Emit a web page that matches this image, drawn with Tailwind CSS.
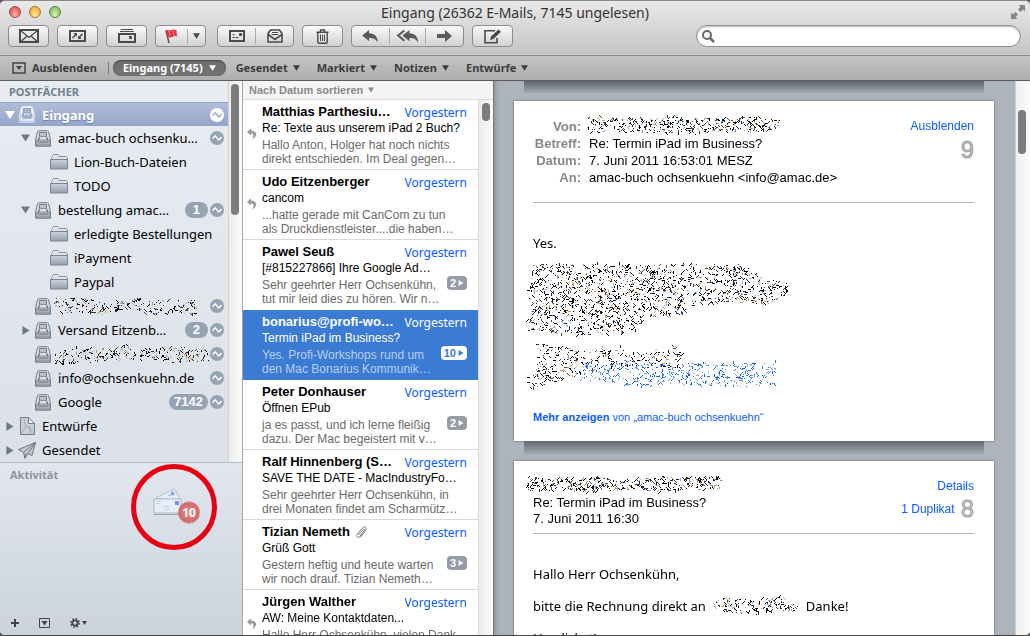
<!DOCTYPE html>
<html lang="de">
<head>
<meta charset="utf-8">
<title>Eingang</title>
<script src="https://cdn.jsdelivr.net/npm/@tailwindcss/browser@4"></script>
</head>
<body class="bg-[#555] font-['Liberation_Sans',sans-serif] text-black">
<svg width="0" height="0" class="absolute">
  <defs>
    <linearGradient id="metal" x1="0" y1="0" x2="0" y2="1"><stop offset="0" stop-color="#ced3dc"/><stop offset="1" stop-color="#979fad"/></linearGradient>
    <linearGradient id="lite" x1="0" y1="0" x2="0" y2="1"><stop offset="0" stop-color="#f4f6fa"/><stop offset="1" stop-color="#ccd3e0"/></linearGradient>
    <radialGradient id="seal"><stop offset="0" stop-color="#e58a87"/><stop offset="1" stop-color="#d06866"/></radialGradient>
  </defs>
  <symbol id="tri-d" viewBox="0 0 10 8"><path d="M0 0h10L5 8z" fill="currentColor"/></symbol>
  <symbol id="tri-r" viewBox="0 0 8 10"><path d="M0 0v10l8-5z" fill="currentColor"/></symbol>
  <symbol id="inbox" viewBox="0 0 16 17">
    <path d="M3.500.7h9l1 1 2 8v6.500H.5V9.700l2-8z" fill="#d5d9e1" stroke="#757d8b"/>
    <path d="M4.500 2.500h7v4l1 2.500v3h-9V9l1-2.500z" fill="#b9c0cb" stroke="#7b8391"/>
    <path d="M4.500 6.500h7v3.500h-7z" fill="#dde1e8" stroke="#7b8391" stroke-width=".8"/>
    <path d="M1 10h2.500v2.500h9V10H15v5.700H1z" fill="#adb4c0" stroke="#7b8391" stroke-width=".8"/>
    <path d="M1.500 15h13" stroke="#8b93a1"/>
  </symbol>
  <symbol id="inbox-w" viewBox="0 0 16 17">
    <path d="M3.500.7h9l1 1 2 8v6.500H.5V9.700l2-8z" fill="url(#lite)" stroke="#e9eef7"/>
    <path d="M4.500 2.500h7v4l1 2.500v3h-9V9l1-2.500z" fill="#a7b5d2" stroke="#8d9dc0"/>
    <path d="M4.500 6.500h7v3.500h-7z" fill="#c5cfe2" stroke="#8d9dc0" stroke-width=".8"/>
    <path d="M1 10h2.500v2.500h9V10H15v5.700H1z" fill="#e3e8f2" stroke="#a9b5cf" stroke-width=".8"/>
  </symbol>
  <symbol id="folder" viewBox="0 0 18 16">
    <path d="M1.500 14.500v-11l1-1V1.400l1-.9h4.500l1 1.200V2.500h7.500l1 1v11z" fill="#dfe2e8" stroke="#8b929f"/>
    <path d="M.5 5.500h17v9.500H.5z" fill="url(#metal)" stroke="#7c8391"/>
  </symbol>
  <symbol id="wave" viewBox="0 0 14 14"><circle cx="7" cy="7" r="7" fill="currentColor"/><path d="M2.500 7.500 5.300 4.800 8.700 9l2.900-3" fill="none" stroke="var(--w,#fff)" stroke-width="1.500"/></symbol>
  <symbol id="reply" viewBox="0 0 18 14"><path d="M7.500 0 0 6l7.500 6V8.500c5 0 7.500 1.500 9.300 5C17 7.500 13.500 3.600 7.500 3.500z" fill="#5a5a5a"/></symbol>
  <symbol id="replied" viewBox="0 0 10 12"><path d="M4 .2 0 4l4 3.600V5.300c2.500.2 3.300 2.700 1.500 6C10.800 8.300 10.400 2.800 4 2.500z" fill="#999"/></symbol>
</svg>

<div class="flex h-screen flex-col overflow-hidden rounded-t-[5px] rounded-b-[5px] border-t border-b border-t-[#8a8a8a] border-b-[#444] bg-[#aab0ba]">
  <header class="shrink-0 font-['Noto_Sans',sans-serif]">
    <div class="border-b border-[#8b8b8b] bg-linear-to-b from-[#e9e9e9] to-[#c5c5c5]">
      <div class="relative flex h-6 items-center">
        <div class="absolute left-[9px] top-[5px] flex gap-2">
          <button aria-label="Schließen" class="size-3 rounded-full border border-[#a24d49] bg-radial-[at_50%_80%] from-[#ffb3a9] to-[#d8413c]"></button>
          <button aria-label="Minimieren" class="size-3 rounded-full border border-[#a9792f] bg-radial-[at_50%_80%] from-[#ffeb9b] to-[#e89c2c]"></button>
          <button aria-label="Zoomen" class="size-3 rounded-full border border-[#578046] bg-radial-[at_50%_80%] from-[#d7f5b5] to-[#6db14f]"></button>
        </div>
        <h1 class="grow text-center text-sm leading-6 text-[#333]">Eingang (26362 E-Mails, 7145 ungelesen)</h1>
        <button aria-label="Vollbild" class="absolute right-[5px] top-1"><svg width="14" height="14" viewBox="0 0 14 14" fill="#868686"><path d="M7.500 0H14v6.500l-2-2-2.500 2.500L7 4.500 9.500 2zM6.500 14H0V7.500l2 2L4.500 7 7 9.500 4.500 12z"/></svg></button>
      </div>
      <div class="flex h-[30px] items-start pl-2 pr-[9px]">
        <div class="flex gap-2">
          <button aria-label="E-Mails abrufen" class="flex h-[22px] w-[41px] items-center justify-center rounded-[4px] border border-[#8c8c8c] bg-linear-to-b from-[#fafafa] to-[#d2d2d2]"><svg width="20" height="14" viewBox="0 0 20 14" fill="none" stroke="#4a4a4a"><path d="M1 1h18v12H1z" stroke-width="2"/><path d="M2 2l8 6.500L18 2M2 12.500l6-5.500M18 12.500 12 7" stroke-width="1.300"/></svg></button>
          <button aria-label="Aktivität" class="flex h-[22px] w-[41px] items-center justify-center rounded-[4px] border border-[#8c8c8c] bg-linear-to-b from-[#fafafa] to-[#d2d2d2]"><svg width="17" height="12" viewBox="0 0 17 12"><path d="M1 1h15v10H1z" fill="none" stroke="#4a4a4a" stroke-width="2"/><path d="M4.500 3H8v3.500L7 5.500 4 8.500l-1-1 2.700-2.700zM12.500 9H9V5.500l1 1L13 3.200l1 1L11.300 7.500z" fill="#4a4a4a"/></svg></button>
          <button aria-label="Archivieren" class="flex h-[22px] w-[41px] items-center justify-center rounded-[4px] border border-[#8c8c8c] bg-linear-to-b from-[#fafafa] to-[#d2d2d2]"><svg width="18" height="14" viewBox="0 0 18 14" fill="none" stroke="#4a4a4a"><path d="M3 .5h12M2 2.500h14" /><path d="M1 5h16v8H1z" stroke-width="2"/><path d="M11.500 7.500h2v2h-2z" fill="#4a4a4a"/></svg></button>
          <div class="flex h-[22px] items-center rounded-[4px] border border-[#8c8c8c] bg-linear-to-b from-[#fafafa] to-[#d2d2d2]">
            <button aria-label="Markieren" class="flex w-8 justify-center border-r border-[#aaa]"><svg width="14" height="15" viewBox="0 0 14 15"><path d="M1 1.500 4 14" stroke="#774545" stroke-width="1.500" fill="none"/><path d="M1 1.500c2-1.500 3.500.5 5.500-.5s3.500-.5 5 .5l.5 6c-2-1-3 0-4.500.5S4 8.500 2.500 8z" fill="#e4323a"/><path d="M4 1l1 6M8 1.500l1 5.500" stroke="#f68b8b"/></svg></button>
            <button aria-label="Markierung wählen" class="flex w-[17px] justify-center"><svg width="7" height="6" class="text-[#4a4a4a]"><use href="#tri-d"/></svg></button>
          </div>
        </div>
        <div class="ml-[11px] flex gap-2">
          <div class="flex h-[22px] items-center rounded-[4px] border border-[#8c8c8c] bg-linear-to-b from-[#fafafa] to-[#d2d2d2]">
            <button aria-label="Als ungelesen markieren" class="flex h-4 w-[38px] items-center justify-center border-r border-[#aaa]"><svg width="16" height="12" viewBox="0 0 16 12" fill="none" stroke="#4a4a4a"><path d="M1 1h14v10H1z" stroke-width="2"/><path d="M10.500 3.500h2v2h-2z" fill="#4a4a4a"/><path d="M3.500 4.500h2M3.500 7.500h2M6.500 7.500h3"/></svg></button>
            <button aria-label="Als gelesen markieren" class="flex w-[37px] justify-center"><svg width="16" height="14" viewBox="0 0 16 14" fill="none" stroke="#4a4a4a" stroke-width="1.600"><path d="M1 4.500 3.500 1h9L15 4.500V13H1z"/><path d="M1 5.500 8 10.500l7-5"/><path d="M5 3.500h6M4.500 5.500h7" stroke-width="1"/></svg></button>
          </div>
          <button aria-label="Löschen" class="flex h-[22px] w-[41px] items-center justify-center rounded-[4px] border border-[#8c8c8c] bg-linear-to-b from-[#fafafa] to-[#d2d2d2]"><svg width="13" height="15" viewBox="0 0 13 15" fill="none" stroke="#4a4a4a" stroke-width="1.400"><path d="M.5 3.200h12M4.500 3V1h4v2M1.800 4v9q0 1.200 1.200 1.200h7q1.200 0 1.200-1.200V4"/><path d="M4.500 5.500v6.500M6.500 5.500v6.500M8.500 5.500v6.500" stroke-width="1"/></svg></button>
          <div class="flex h-[22px] items-center rounded-[4px] border border-[#8c8c8c] bg-linear-to-b from-[#fafafa] to-[#d2d2d2]">
            <button aria-label="Antworten" class="flex h-4 w-[38px] items-center justify-center border-r border-[#aaa]"><svg width="17" height="13"><use href="#reply"/></svg></button>
            <button aria-label="Allen antworten" class="flex h-4 w-9 items-center justify-center border-r border-[#aaa]"><svg width="24" height="13" viewBox="0 0 24 14"><path d="M8 .5 1.500 6 8 11.500" fill="none" stroke="#5a5a5a" stroke-width="2.200"/><svg x="6" width="18" height="14"><use href="#reply"/></svg></svg></button>
            <button aria-label="Weiterleiten" class="flex w-[37px] justify-center"><svg width="15" height="12" viewBox="0 0 15 12"><path d="M0 4h8V0l7 6-7 6V8H0z" fill="#5a5a5a"/></svg></button>
          </div>
          <button aria-label="Neue E-Mail" class="flex h-[22px] w-[41px] items-center justify-center rounded-[4px] border border-[#8c8c8c] bg-linear-to-b from-[#fafafa] to-[#d2d2d2]"><svg width="18" height="15" viewBox="0 0 18 15" fill="none" stroke="#4a4a4a"><path d="M11 1.800H1v12h12V9" stroke-width="1.600"/><path d="m6 11 1-3.500 7.500-7L17 2.700 9.500 10z" fill="#4a4a4a" stroke="none"/></svg></button>
        </div>
        <label class="ml-auto flex h-[22px] w-[325px] items-center gap-2 rounded-full border border-[#8c8c8c] bg-white pl-[5px] shadow-[inset_0_1px_2px_#bbb]">
          <svg width="13" height="13" viewBox="0 0 13 13" fill="none" stroke="#6a6a6a" stroke-width="2"><circle cx="5" cy="5" r="4"/><path d="m8 8 4 4" stroke-width="2.500"/></svg>
          <input type="text" aria-label="Suchen" class="min-w-0 grow bg-transparent text-xs outline-none">
        </label>
      </div>
    </div>
    <nav class="flex h-[25px] items-center border-b border-[#5c5c5c] bg-linear-to-b from-[#c4c4c4] to-[#aeaeae] pl-3 text-[11px] font-bold text-[#3c3c3c]">
      <button class="flex items-center gap-[6px]"><svg width="14" height="12" viewBox="0 0 14 12"><path d="M1 1h12v10H1z" fill="none" stroke="#444" stroke-width="1.500"/><path d="M4 4h6l-3 4z" fill="#444"/></svg>Ausblenden</button>
      <span class="ml-[11px] mr-1 h-3 w-px bg-[#7a7a7a]"></span>
      <button class="flex h-4 items-center gap-[6px] rounded-full bg-[#717171] px-[10px] text-white shadow-[inset_0_1px_2px_#444]">Eingang (7145)<svg width="7" height="6"><use href="#tri-d"/></svg></button>
      <div class="ml-[10px] flex gap-[17px]">
        <button class="flex items-center gap-[5px]">Gesendet<svg width="7" height="6"><use href="#tri-d"/></svg></button>
        <button class="flex items-center gap-[5px]">Markiert<svg width="7" height="6"><use href="#tri-d"/></svg></button>
        <button class="flex items-center gap-[5px]">Notizen<svg width="7" height="6"><use href="#tri-d"/></svg></button>
        <button class="flex items-center gap-[5px]">Entwürfe<svg width="7" height="6"><use href="#tri-d"/></svg></button>
      </div>
    </nav>
  </header>

  <div class="flex min-h-0 grow">
    <aside class="flex w-[243px] shrink-0 flex-col border-r border-[#a5a5a5] font-['Noto_Sans',sans-serif]">
      <div class="flex min-h-0 grow">
        <div class="min-w-0 grow overflow-hidden bg-linear-to-b from-[#e8ecf2] to-[#dce1e9]">
          <h2 class="h-[21px] pl-[9px] text-[11px] font-bold leading-[22px] text-[#717e8d]">POSTFÄCHER</h2>
          <ul class="text-[13px] leading-6">
            <li class="flex h-6 items-center gap-1 border-t border-[#93a2c8] bg-linear-to-b from-[#b0bcd9] to-[#95a5c9] pl-[5px] pr-1 text-white"><svg width="10" height="8"><use href="#tri-d"/></svg><svg width="16" height="17" class="mr-[3px]"><use href="#inbox-w"/></svg><span class="grow font-bold [text-shadow:0_1px_1px_#6b7ba3]">Eingang</span><svg width="14" height="14" class="[--w:#9fadcf]"><use href="#wave"/></svg></li>
            <li class="flex h-6 items-center pl-[21px] pr-1"><svg width="9" height="8" class="mr-[5px] text-[#6c7a88]"><use href="#tri-d"/></svg><svg width="16" height="17" class="mr-[7px]"><use href="#inbox"/></svg><span class="grow whitespace-nowrap">amac-buch ochsenku…</span><svg width="14" height="14" class="shrink-0 text-[#95a3b2]"><use href="#wave"/></svg></li>
            <li class="flex h-6 items-center gap-[6px] pl-[50px]"><svg width="18" height="16"><use href="#folder"/></svg>Lion-Buch-Dateien</li>
            <li class="flex h-6 items-center gap-[6px] pl-[50px]"><svg width="18" height="16"><use href="#folder"/></svg>TODO</li>
            <li class="flex h-6 items-center pl-[21px] pr-1"><svg width="9" height="8" class="mr-[5px] text-[#6c7a88]"><use href="#tri-d"/></svg><svg width="16" height="17" class="mr-[7px]"><use href="#inbox"/></svg><span class="grow whitespace-nowrap">bestellung amac…</span><b class="mr-[2px] h-4 rounded-full bg-[#95a3b2] px-2 font-['Liberation_Sans'] leading-4 text-white">1</b><svg width="14" height="14" class="shrink-0 text-[#95a3b2]"><use href="#wave"/></svg></li>
            <li class="flex h-6 items-center gap-[6px] pl-[50px]"><svg width="18" height="16" class="shrink-0"><use href="#folder"/></svg><span class="whitespace-nowrap">erledigte Bestellungen</span></li>
            <li class="flex h-6 items-center gap-[6px] pl-[50px]"><svg width="18" height="16"><use href="#folder"/></svg>iPayment</li>
            <li class="flex h-6 items-center gap-[6px] pl-[50px]"><svg width="18" height="16"><use href="#folder"/></svg>Paypal</li>
            <li class="flex h-6 items-center pl-[35px] pr-1"><svg width="16" height="17" class="mr-[3px]"><use href="#inbox"/></svg><canvas width="150" height="20" data-seed="5" data-regions='[{"d":"M2 2L30 1 55 8 85 1 115 3 140 4 140 17 100 18 70 14 45 19 20 16 2 18Z","n":210,"c":"ink"}]'></canvas><svg width="14" height="14" class="ml-auto shrink-0 text-[#95a3b2]"><use href="#wave"/></svg></li>
            <li class="flex h-6 items-center pl-[22px] pr-1"><svg width="8" height="9" class="mr-[5px] text-[#6c7a88]"><use href="#tri-r"/></svg><svg width="16" height="17" class="mr-[7px]"><use href="#inbox"/></svg><span class="grow whitespace-nowrap">Versand Eitzenb…</span><b class="mr-[2px] h-4 rounded-full bg-[#95a3b2] px-2 font-['Liberation_Sans'] leading-4 text-white">2</b><svg width="14" height="14" class="shrink-0 text-[#95a3b2]"><use href="#wave"/></svg></li>
            <li class="flex h-6 items-center pl-[35px] pr-1"><svg width="16" height="17" class="mr-[2px]"><use href="#inbox"/></svg><canvas width="157" height="22" data-seed="8" data-regions='[{"d":"M2 10L20 4 60 6 72 0 80 6 120 2 155 6 157 18 120 20 110 17 60 16 30 20 2 20Z","n":230,"c":"ink"}]'></canvas><svg width="14" height="14" class="ml-auto shrink-0 text-[#95a3b2]"><use href="#wave"/></svg></li>
            <li class="flex h-6 items-center pl-[35px] pr-1"><svg width="16" height="17" class="mr-[7px]"><use href="#inbox"/></svg><span class="grow">info@ochsenkuehn.de</span><svg width="14" height="14" class="text-[#95a3b2]"><use href="#wave"/></svg></li>
            <li class="flex h-6 items-center pl-[35px] pr-1"><svg width="16" height="17" class="mr-[7px]"><use href="#inbox"/></svg><span class="grow">Google</span><b class="mr-[2px] h-4 rounded-full bg-[#95a3b2] px-[5px] font-['Liberation_Sans'] leading-4 text-white">7142</b><svg width="14" height="14" class="text-[#95a3b2]"><use href="#wave"/></svg></li>
            <li class="flex h-6 items-center pl-[6px]"><svg width="8" height="9" class="mr-[5px] text-[#6c7a88]"><use href="#tri-r"/></svg><svg width="17" height="18" viewBox="0 0 17 18" class="mr-[6px]"><path d="M1.500.5h8l6 6v11h-14z" fill="#c9ced8" stroke="#747b89"/><path d="M2 17 7 9.500h3l5 7.500M7 9.500 5 2M10 9.500l2 7" fill="none" stroke="#9aa1ae" stroke-width=".8"/><path d="M9.500.5v6h6z" fill="#f1f3f6" stroke="#747b89"/></svg>Entwürfe</li>
            <li class="flex h-6 items-center pl-[6px]"><svg width="8" height="9" class="mr-1 text-[#6c7a88]"><use href="#tri-r"/></svg><svg width="18" height="17" viewBox="0 0 18 17" class="mr-[6px]"><path d="M.5 7.500 17.500.5 14 13.500l-4-2-3 5-1.500-6z" fill="#c3c9d3" stroke="#6f7785"/><path d="M5.500 10.500 17.500.5 10 11.500M7 16l1-5" fill="none" stroke="#6f7785"/></svg>Gesendet</li>
          </ul>
        </div>
        <div class="w-[14px] shrink-0 border-l border-[#d2d2d2] bg-linear-to-r from-[#ececec] to-[#fcfcfc] px-[2px] pt-[3px]"><div class="h-[131px] w-2 rounded-full bg-[#7c7c7c]"></div></div>
      </div>
      <section class="relative flex h-[173px] shrink-0 flex-col justify-between border-t border-[#b0b9c7] bg-linear-to-b from-[#e2e7ef] to-[#ccd3dc]">
        <h2 class="pl-[10px] pt-1 text-[11px] font-bold leading-4 text-[#8d949d]">Aktivität</h2>
        <svg width="88" height="88" viewBox="0 0 88 88" class="absolute left-[130px] top-0">
          <path d="M26 35 44.500 25.500 51 38z" fill="#e3ecf5" stroke="#a9b6c3" stroke-width=".8"/><path d="m42 28 3 2-2 3-3-2z" fill="#8aa8e4"/><path d="M38 32l3 1" stroke="#a8b8cb"/>
          <path d="M24 36h27v14H24z" fill="#e6eff7" stroke="#9facb9" stroke-width=".8"/><path d="M23.500 51.500h27" stroke="#9ba5b0"/><path d="M45 38h4v4h-4z" fill="#6f95e0"/><path d="M26 38.500h5M26 40.500h4M34 43.500h6M35 46h5" stroke="#b7c7d7" stroke-width=".8"/>
          <circle cx="59" cy="49.500" r="10.500" fill="url(#seal)"/><circle cx="59" cy="49.500" r="10.800" fill="none" stroke="#d37370" stroke-dasharray="1.500 1"/>
          <text x="59" y="54" text-anchor="middle" fill="#fff" font-family="Noto Sans" font-weight="700" font-size="12">10</text>
          <circle cx="44" cy="44" r="40.500" fill="none" stroke="#e60012" stroke-width="5"/>
        </svg>
        <div class="flex h-6 items-center pl-[11px] text-[#444]">
          <button aria-label="Hinzufügen" class="mr-5"><svg width="8" height="8"><path d="M4 0v8M0 4h8" stroke="currentColor" stroke-width="2"/></svg></button>
          <button aria-label="Aktivität ausblenden" class="mr-5"><svg width="11" height="10" viewBox="0 0 11 10"><path d="M.5.5h10v9H.5z" fill="none" stroke="currentColor"/><path d="M2.500 3h6l-3 4.500z" fill="currentColor"/></svg></button>
          <button aria-label="Aktionen" class="flex items-center gap-[2px]"><svg width="10" height="10" viewBox="0 0 10 10" fill="none" stroke="currentColor"><circle cx="5" cy="5" r="2.700" stroke-width="1.800"/><circle cx="5" cy="5" r="4.200" stroke-width="1.500" stroke-dasharray="1.650 1.650"/></svg><svg width="5" height="4"><use href="#tri-d"/></svg></button>
        </div>
      </section>
    </aside>

    <section class="flex w-[251px] shrink-0 flex-col border-r border-[#777] bg-white">
      <button class="flex h-[19px] shrink-0 items-center gap-[5px] border-b border-[#dcdcdc] bg-[#f5f5f5] pl-[6px] text-[11px] font-bold text-[#888]">Nach Datum sortieren<svg width="6" height="6"><use href="#tri-d"/></svg></button>
      <div class="flex min-h-0 grow">
        <ul class="min-w-0 grow overflow-hidden whitespace-nowrap text-xs">
          <li class="relative h-[70px] border-b border-[#d8d8d8] pl-[19px] pr-[11px] pt-1">
            <svg width="10" height="12" class="absolute left-1 top-7"><use href="#replied"/></svg>
            <div class="flex h-4 justify-between leading-4"><b class="text-[13px]">Matthias Parthesiu…</b><time class="pt-px font-['Noto_Sans'] text-[#0a5cff]">Vorgestern</time></div>
            <p class="mb-[2px] leading-4">Re: Texte aus unserem iPad 2 Buch?</p>
            <p class="leading-[14px] text-[#6a6a6a]">Hallo Anton, Holger hat noch nichts<br>direkt entschieden. Im Deal gegen…</p>
          </li>
          <li class="relative h-[70px] border-b border-[#d8d8d8] pl-[19px] pr-[11px] pt-1">
            <svg width="10" height="12" class="absolute left-1 top-7"><use href="#replied"/></svg>
            <div class="flex h-4 justify-between leading-4"><b class="text-[13px]">Udo Eitzenberger</b><time class="pt-px font-['Noto_Sans'] text-[#0a5cff]">Vorgestern</time></div>
            <p class="mb-[2px] leading-4">cancom</p>
            <p class="leading-[14px] text-[#6a6a6a]">...hatte gerade mit CanCom zu tun<br>als Druckdienstleister....die haben…</p>
          </li>
          <li class="relative h-[70px] pl-[19px] pr-[11px] pt-1">
            <div class="flex h-4 justify-between leading-4"><b class="text-[13px]">Pawel Seuß</b><time class="pt-px font-['Noto_Sans'] text-[#0a5cff]">Vorgestern</time></div>
            <p class="mb-[2px] leading-4">[#815227866] Ihre Google Ad…</p>
            <p class="leading-[14px] text-[#6a6a6a]">Sehr geehrter Herr Ochsenkühn,<br>tut mir leid dies zu hören. Wir n…</p>
            <button class="absolute right-[11px] top-9 flex h-[14px] items-center gap-[2px] rounded-[4px] bg-[#969ca6] px-[3px] text-[11px] font-bold text-white">2<svg width="6" height="6"><use href="#tri-r"/></svg></button>
          </li>
          <li class="relative h-[70px] bg-[#3b7bd3] pl-[19px] pr-[11px] pt-1 text-white">
            <div class="flex h-4 justify-between leading-4"><b class="text-[13px]">bonarius@profi-wo…</b><time class="pt-px font-['Noto_Sans']">Vorgestern</time></div>
            <p class="mb-[2px] leading-4">Termin iPad im Business?</p>
            <p class="leading-[14px] text-[#b9cfef]">Yes. Profi-Workshops rund um<br>den Mac Bonarius Kommunik…</p>
            <button class="absolute right-[11px] top-9 flex h-[14px] items-center gap-[2px] rounded-[4px] bg-white px-[3px] text-[11px] font-bold text-[#3b7bd3]">10<svg width="6" height="6"><use href="#tri-r"/></svg></button>
          </li>
          <li class="relative h-[70px] border-b border-[#d8d8d8] pl-[19px] pr-[11px] pt-1">
            <div class="flex h-4 justify-between leading-4"><b class="text-[13px]">Peter Donhauser</b><time class="pt-px font-['Noto_Sans'] text-[#0a5cff]">Vorgestern</time></div>
            <p class="mb-[2px] leading-4">Öffnen EPub</p>
            <p class="leading-[14px] text-[#6a6a6a]">ja es passt, und ich lerne fleißig<br>dazu. Der Mac begeistert mit v…</p>
            <button class="absolute right-[11px] top-9 flex h-[14px] items-center gap-[2px] rounded-[4px] bg-[#969ca6] px-[3px] text-[11px] font-bold text-white">2<svg width="6" height="6"><use href="#tri-r"/></svg></button>
          </li>
          <li class="relative h-[70px] border-b border-[#d8d8d8] pl-[19px] pr-[11px] pt-1">
            <div class="flex h-4 justify-between leading-4"><b class="text-[13px]">Ralf Hinnenberg (S…</b><time class="pt-px font-['Noto_Sans'] text-[#0a5cff]">Vorgestern</time></div>
            <p class="mb-[2px] leading-4">SAVE THE DATE - MacIndustryFo…</p>
            <p class="leading-[14px] text-[#6a6a6a]">Sehr geehrter Herr Ochsenkühn, in<br>drei Monaten findet am Scharmütz…</p>
          </li>
          <li class="relative h-[70px] border-b border-[#d8d8d8] pl-[19px] pr-[11px] pt-1">
            <div class="flex h-4 justify-between leading-4"><b class="flex items-center gap-1 text-[13px]">Tizian Nemeth<svg width="14" height="15" viewBox="0 0 14 14" fill="none" stroke="#777"><path d="M4.500 9.500 9.500 4c1-1 2 .2 1.200 1L5.500 11.200c-1.600 1.700-4-.4-2.500-2.200L8.600 2.300c2-2.100 4.900.4 3.100 2.600L6 12"/></svg></b><time class="pt-px font-['Noto_Sans'] text-[#0a5cff]">Vorgestern</time></div>
            <p class="mb-[2px] leading-4">Grüß Gott</p>
            <p class="leading-[14px] text-[#6a6a6a]">Gestern heftig und heute warten<br>wir noch drauf. Tizian Nemeth…</p>
            <button class="absolute right-[11px] top-9 flex h-[14px] items-center gap-[2px] rounded-[4px] bg-[#969ca6] px-[3px] text-[11px] font-bold text-white">3<svg width="6" height="6"><use href="#tri-r"/></svg></button>
          </li>
          <li class="relative h-[70px] border-b border-[#d8d8d8] pl-[19px] pr-[11px] pt-1">
            <svg width="10" height="12" class="absolute left-1 top-7"><use href="#replied"/></svg>
            <div class="flex h-4 justify-between leading-4"><b class="text-[13px]">Jürgen Walther</b><time class="pt-px font-['Noto_Sans'] text-[#0a5cff]">Vorgestern</time></div>
            <p class="mb-[2px] leading-4">AW: Meine Kontaktdaten...</p>
            <p class="leading-[14px] text-[#6a6a6a]">Hallo Herr Ochsenkühn, vielen Dank</p>
          </li>
        </ul>
        <div class="w-[15px] shrink-0 border-l border-[#ddd] bg-linear-to-r from-[#ececec] to-[#fcfcfc] px-[3px] pt-[3px]"><div class="h-[18px] w-2 rounded-full bg-[#7c7c7c]"></div></div>
      </div>
    </section>

    <main class="min-w-0 grow overflow-hidden bg-[#adb4be] pl-5 pr-[21px] shadow-[inset_4px_0_4px_-2px_#8d939c]">
      <div class="mx-[10px] mb-2 h-3 bg-linear-to-b from-[#5f646b] to-[#a4abb5]"></div>
      <article class="bg-white pl-[19px] pr-5 pt-[17px] shadow-[0_0_2px_#555]">
        <div class="flex items-start border-b border-[#b5b5b5] pb-4">
          <dl class="grid grow grid-cols-[48px_1fr] gap-x-2 text-[13px] leading-[17px]">
            <dt class="text-right font-bold text-[#888]">Von:</dt><dd class="h-[17px]"><canvas width="204" height="22" class="-mx-1 -mt-1" data-seed="3" data-regions='[{"d":"M3 3L30 2 60 5 90 2 130 4 160 2 195 5 196 12 180 18 140 17 110 20 90 18 60 19 20 17 3 20Z","n":420,"c":"ink"}]'></canvas></dd>
            <dt class="text-right font-bold text-[#888]">Betreff:</dt><dd>Re: Termin iPad im Business?</dd>
            <dt class="text-right font-bold text-[#888]">Datum:</dt><dd>7. Juni 2011 16:53:01 MESZ</dd>
            <dt class="text-right font-bold text-[#888]">An:</dt><dd>amac-buch ochsenkuehn &lt;info@amac.de&gt;</dd>
          </dl>
          <div class="text-right"><a href="#" class="block text-xs leading-4 text-[#0a5cff]">Ausblenden</a><span class="block text-2xl leading-8 text-[#bbb] [-webkit-text-stroke:1px_#a3a3a3]">9</span></div>
        </div>
        <p class="pt-8 font-['Noto_Sans'] text-[13px] leading-4">Yes.</p>
        <canvas width="268" height="140" class="-ml-2 mt-2 block" data-seed="11" data-regions='[{"d":"M8 4L130 5 218 4 232 15 262 24 264 34 240 45 200 42 164 47 160 55 120 58 112 72 60 76 2 72 4 30Z","n":1550,"c":"ink"},{"d":"M12 84L60 90 90 84 110 96 150 84 160 100 158 108 70 110 40 120 2 130 1 120 12 110Z","n":330,"c":"ink"},{"d":"M60 104L110 100 160 104 250 103 250 126 200 128 150 124 110 128 55 120Z","n":430,"c":"blue"}]'></canvas>
        <p class="pb-4 pt-[10px] text-[11px] leading-4 text-[#0a5cff]"><a href="#"><b>Mehr anzeigen</b> von „amac-buch ochsenkuehn“</a></p>
      </article>
      <div class="mx-[10px] mb-[6px] h-[14px] bg-linear-to-b from-[#62676f] to-[#a9b0ba]"></div>
      <article class="h-[300px] bg-white pl-[19px] pr-5 pt-4 shadow-[0_0_2px_#555]">
        <div class="flex items-start border-b border-[#b5b5b5] pb-[6px]">
          <div class="grow text-[13px] leading-4">
            <canvas width="204" height="24" class="-ml-2 -mt-[5px] -mb-[1px] block" data-seed="21" data-regions='[{"d":"M2 4L20 6 50 7 70 4 100 8 130 5 165 4 198 4 196 16 150 18 140 20 110 17 60 20 40 18 2 20Z","n":420,"c":"ink"}]'></canvas>
            <p>Re: Termin iPad im Business?</p>
            <p>7. Juni 2011 16:30</p>
          </div>
          <div class="flex flex-col items-end text-xs text-[#0a5cff]"><a href="#" class="leading-[18px]">Details</a><div class="flex items-center gap-[6px]"><a href="#">1 Duplikat</a><span class="text-2xl leading-7 text-[#ccc] [-webkit-text-stroke:1px_#a3a3a3]">8</span></div></div>
        </div>
        <div class="pt-8 font-['Noto_Sans'] text-[13px] leading-4">
          <p>Hallo Herr Ochsenkühn,</p>
          <p class="mt-4 flex">bitte die Rechnung direkt an<canvas width="96" height="24" class="-my-1 mr-1" data-seed="31" data-regions='[{"d":"M6 6L20 3 50 6 70 2 90 8 94 16 60 20 50 20 20 18 8 12Z","n":150,"c":"ink"}]'></canvas>Danke!</p>
          <p class="mt-4">Herzlichst!</p>
        </div>
      </article>
    </main>
    <div class="w-[15px] shrink-0 border-l border-[#d0d0d0] bg-linear-to-r from-[#efefef] to-[#fcfcfc] px-[2px] pt-[29px]"><div class="h-11 w-2 rounded-full bg-[#7c7c7c]"></div></div>
  </div>
</div>
<script>
// Redacted passages: speckled ink inside the outline given for each canvas.
const inks = {
  ink: ['#000', '#000', '#000', '#111a2a', '#1b2c55', '#5c3a1c', '#3f4a55', '#8bb9dd', '#c79a62'],
  blue: ['#0a5ce6', '#0a5ce6', '#2f77ef', '#4b8af5', '#8a9df2']
};
document.querySelectorAll('canvas[data-regions]').forEach(cv => {
  let s = +cv.dataset.seed * 7919;
  const rnd = () => { s = (s * 1664525 + 1013904223) % 4294967296; return s / 4294967296; };
  const g = cv.getContext('2d');
  for (const r of JSON.parse(cv.dataset.regions)) {
    const path = new Path2D(r.d), pal = inks[r.c];
    for (let i = 0; i < r.n; i++) {
      let x = Math.floor(rnd() * cv.width), y = Math.floor(rnd() * cv.height);
      if (!g.isPointInPath(path, x, y)) { if (rnd() < 0.995) i -= 0.999; continue; }
      g.fillStyle = pal[Math.floor(rnd() * pal.length)];
      const len = 1 + Math.floor(rnd() * 3), dx = Math.floor(rnd() * 3) - 1, dy = Math.floor(rnd() * 3) - 1;
      for (let k = 0; k < len; k++) { g.fillRect(x, y, 1, 1); x += dx; y += dy; }
    }
  }
});
</script>
</body>
</html>
